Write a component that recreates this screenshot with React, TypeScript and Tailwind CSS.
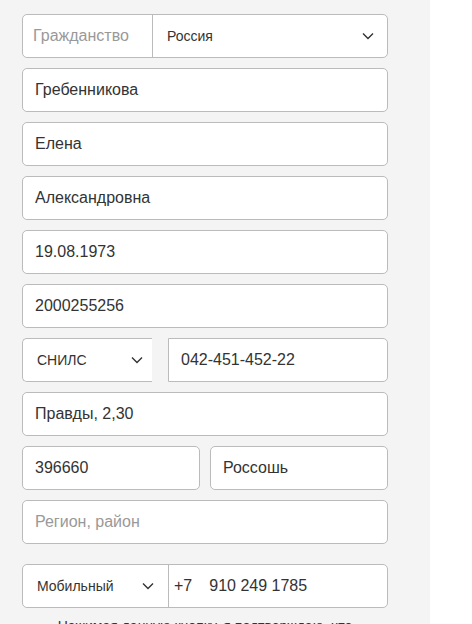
const font = { fontFamily: '"Liberation Sans", Arial, sans-serif' };

function Chevron({ className = '' }: { className?: string }) {
  return (
    <svg width="12" height="8" viewBox="0 0 12 8" className={className}>
      <path d="M1 1.5 L6 6.5 L11 1.5" fill="none" stroke="#333" strokeWidth="1.4" />
    </svg>
  );
}

function Field({ value, placeholder }: { value?: string; placeholder?: string }) {
  return (
    <div className="h-[44px] flex items-center px-[12px] bg-white border border-[#bbb] rounded-[5px] text-[16px]">
      {value ? (
        <span className="text-[#333]">{value}</span>
      ) : (
        <span className="text-[#999]">{placeholder}</span>
      )}
    </div>
  );
}

export default function App() {
  return (
    <div className="flex bg-white min-h-[624px]" style={font}>
      <div className="w-[430px] bg-[#f4f4f4] pt-[14px] pl-[22px] pr-[42px] flex flex-col">
        <div className="flex flex-col gap-[10px]">
          {/* гражданство */}
          <div className="h-[44px] flex bg-white border border-[#bbb] rounded-[5px]">
            <div className="w-[130px] flex items-center pl-[10px] border-r border-[#bbb] text-[16px] text-[#999]">
              Гражданство
            </div>
            <div className="flex-1 flex items-center justify-between pl-[14px] pr-[13px] text-[14px] text-[#333]">
              <span>Россия</span>
              <Chevron />
            </div>
          </div>

          <Field value="Гребенникова" />
          <Field value="Елена" />
          <Field value="Александровна" />
          <Field value="19.08.1973" />
          <Field value="2000255256" />

          {/* документ */}
          <div className="flex gap-[16px]">
            <div className="w-[130px] h-[44px] flex items-center justify-between pl-[14px] pr-[9px] bg-white border-y border-l border-[#bbb] rounded-l-[5px] text-[14px] text-[#333]">
              <span>СНИЛС</span>
              <Chevron />
            </div>
            <div className="flex-1 h-[44px] flex items-center px-[12px] bg-white border border-[#bbb] rounded-r-[5px] text-[16px] text-[#333]">
              042-451-452-22
            </div>
          </div>

          <Field value="Правды, 2,30" />

          <div className="grid grid-cols-2 gap-[10px]">
            <Field value="396660" />
            <Field value="Россошь" />
          </div>

          <Field placeholder="Регион, район" />
        </div>

        {/* телефон */}
        <div className="mt-[20px] h-[44px] flex bg-white border border-[#bbb] rounded-[5px]">
          <div className="w-[146px] flex items-center justify-between pl-[14px] pr-[14px] border-r border-[#bbb] text-[14px] text-[#333]">
            <span>Мобильный</span>
            <Chevron />
          </div>
          <div className="flex items-center pl-[5px] text-[16px] text-[#333]">
            <span>+7</span>
            <span className="ml-[17px]">910 249 1785</span>
          </div>
        </div>

        <p className="mt-[9px] text-center text-[14px] text-[#333] leading-[18px]">
          Нажимая данную кнопку, я подтверждаю, что
        </p>
      </div>
    </div>
  );
}
